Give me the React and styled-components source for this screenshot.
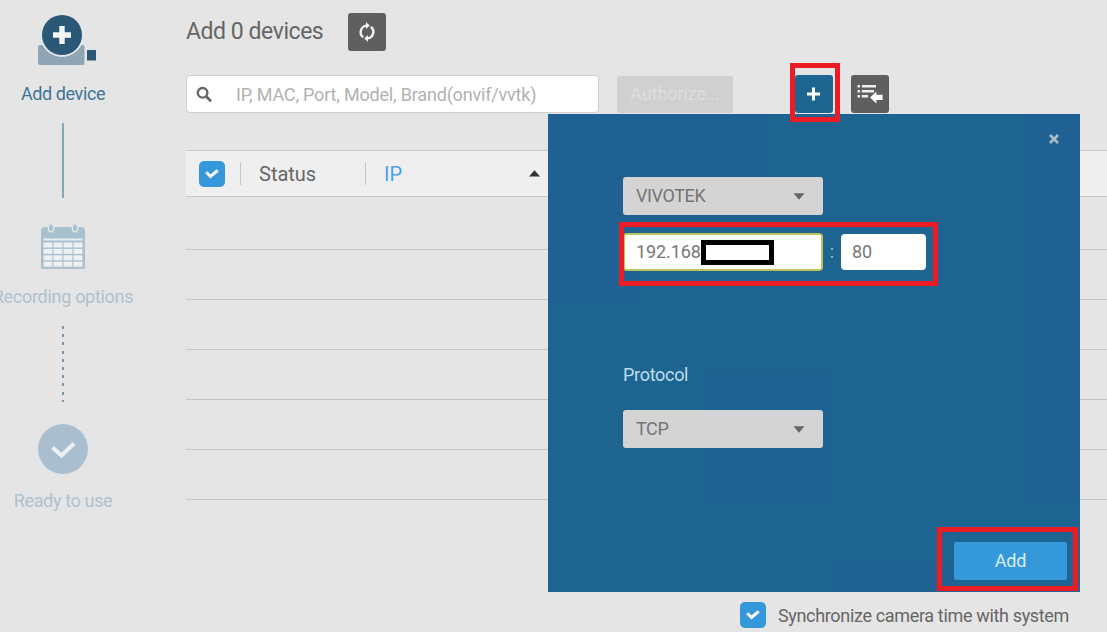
import React from 'react';
import styled, { createGlobalStyle } from 'styled-components';


const GlobalStyle = createGlobalStyle`
  * {
    box-sizing: border-box;
  }

  body {
    margin: 0;
    font-family: Roboto, "Liberation Sans", sans-serif;
    color: #666;
    background: #e5e5e5;
  }
`;

const Page = styled.div`
  position: relative;
  display: flex;
  width: 1107px;
  height: 632px;
  overflow: hidden;
  background: #e5e5e5;
`;

const Steps = styled.nav`
  display: flex;
  flex-direction: column;
  align-items: center;
  flex: none;
  width: 126px;
  margin-right: 60px;
  padding-top: 13px;
`;

const StepIcon = styled.svg`
  display: block;
  flex: none;
  overflow: visible;
`;

const StepLabel = styled.div`
  height: 22px;
  margin-top: ${props => props.$gap}px;
  font-size: 18px;
  line-height: 22px;
  letter-spacing: ${props => props.$spacing || 0}px;
  white-space: nowrap;
  color: ${props => (props.$active ? '#3d7498' : '#afc1cf')};
`;

const SolidLine = styled.div`
  flex: none;
  width: 2px;
  height: 75px;
  margin: 18px 0 26px;
  background: #82a7bb;
`;

const DottedLine = styled.div`
  flex: none;
  width: 2px;
  height: 76px;
  margin: 18px 0 22px;
  background: repeating-linear-gradient(#7595ad 0 3px, transparent 3px 8.2px);
`;

const Main = styled.main`
  display: flex;
  flex-direction: column;
  flex: 1;
  min-width: 0;
`;

const Header = styled.header`
  display: flex;
  align-items: center;
  height: 37px;
  margin-top: 13px;
`;

const Title = styled.h1`
  width: 162px;
  margin: 0;
  font-size: 23px;
  font-weight: 400;
  line-height: 37px;
  letter-spacing: -0.45px;
  white-space: nowrap;
`;

const SquareButton = styled.button`
  display: flex;
  align-items: center;
  justify-content: center;
  flex: none;
  width: 38px;
  height: 38px;
  margin-left: ${props => props.$left || 0}px;
  padding: 0;
  border: 0;
  border-radius: 3px;
  background: ${props => (props.$primary ? '#1d6691' : '#5f5f5f')};
`;

const Toolbar = styled.div`
  display: flex;
  align-items: center;
  height: 38px;
  margin-top: 25px;
`;

const SearchBox = styled.div`
  display: flex;
  align-items: center;
  width: 413px;
  height: 38px;
  padding-left: 9px;
  border: 1px solid #cfcfcf;
  border-radius: 4px;
  background: #fff;
  color: #b2b2b2;
  font-size: 18px;
  letter-spacing: -0.18px;
  white-space: nowrap;

  svg {
    margin-right: 23px;
  }
`;

const AuthorizeButton = styled.button`
  width: 116px;
  height: 37px;
  margin-left: 18px;
  padding: 0 0 2px;
  border: 0;
  border-radius: 3px;
  background: #d0d0d0;
  color: #dedede;
  font: 18px Roboto, sans-serif;
  letter-spacing: -0.1px;
`;

const Table = styled.div`
  margin-top: 37px;
`;

const TableHead = styled.div`
  display: flex;
  align-items: center;
  height: 47px;
  padding-left: 13px;
  border: 1px solid #c8c8c8;
  border-width: 1px 0;
  background: #efefef;
`;

const HeadCell = styled.div`
  display: flex;
  align-items: center;
  width: ${props => props.$width}px;
  height: 23px;
  margin-left: ${props => props.$left || 0}px;
  padding-left: 18px;
  border-left: 1px solid #c6c6c6;
  font-size: 20px;
  color: ${props => (props.$active ? '#4aa0e6' : '#666')};
`;

const SortArrow = styled.svg`
  margin-left: auto;
`;

const TableRow = styled.div`
  height: ${props => props.$height || 50}px;
  border-bottom: 1px solid #c6c6c6;
`;

const CheckBox = styled.span`
  display: flex;
  align-items: center;
  justify-content: center;
  flex: none;
  width: 26px;
  height: 26px;
  border-radius: 5px;
  background: #3598db;
`;

const SyncOption = styled.label`
  display: flex;
  align-items: center;
  height: 26px;
  margin: 102px 0 0 554px;
  font-size: 18px;
  letter-spacing: -0.34px;
  white-space: nowrap;

  ${CheckBox} {
    margin-right: 12px;
  }
`;

// The surface is slightly uneven: a few areas carry a bluer tint
const tint = 'linear-gradient(#206194, #206194)';

const Popup = styled.section`
  position: absolute;
  left: 548px;
  top: 114px;
  display: flex;
  flex-direction: column;
  width: 532px;
  height: 478px;
  padding: 19px 13px 12px 75px;
  background:
    ${tint} 0 0 / 220px 68px no-repeat,
    ${tint} 0 0 / 92px 190px no-repeat,
    ${tint} 156px 259px / 126px 128px no-repeat,
    ${tint} 476px 0 / 56px 386px no-repeat,
    ${tint} 284px 450px / 122px 28px no-repeat,
    #1d6590;
`;

const CloseButton = styled.button`
  align-self: flex-end;
  display: flex;
  width: 12px;
  height: 12px;
  margin-right: 7px;
  padding: 0;
  border: 0;
  background: none;
`;

const Select = styled.div`
  display: flex;
  align-items: center;
  justify-content: space-between;
  flex: none;
  width: 200px;
  height: 38px;
  margin-top: ${props => props.$gap}px;
  padding: 0 18px 2px 13px;
  border-radius: 3px;
  background: #d4d4d4;
  color: #757575;
  font-size: 18px;
  letter-spacing: -0.4px;

  svg {
    margin-top: 2px;
  }
`;

const AddressRow = styled.div`
  display: flex;
  align-items: center;
  height: 38px;
  margin-top: 18px;
`;

const Field = styled.div`
  display: flex;
  align-items: center;
  width: ${props => props.$width}px;
  height: ${props => (props.$focused ? 38 : 36)}px;
  padding-left: 11px;
  padding-bottom: ${props => (props.$focused ? 0 : 1)}px;
  border: ${props => (props.$focused ? '2px solid #bec455' : '0')};
  border-radius: 4px;
  background: #fff;
  color: #777;
  font-size: 18px;
`;

const AddressText = styled.span`
  width: 65px;
  padding-bottom: 1px;
  letter-spacing: -0.1px;
`;

const Mask = styled.span`
  flex: none;
  width: 73px;
  height: 25px;
  border: 5px solid #000;
  background: #fff;
`;

const Colon = styled.span`
  width: 18px;
  padding-bottom: 2px;
  text-align: center;
  color: #8fc0dc;
  font-size: 18px;
`;

const FieldLabel = styled.div`
  height: 22px;
  margin-top: 93px;
  font-size: 18px;
  line-height: 22px;
  letter-spacing: -0.3px;
  color: #bfdcee;
`;

const AddButton = styled.button`
  align-self: flex-end;
  width: 113px;
  height: 38px;
  margin-top: auto;
  padding: 0 0 2px;
  border: 0;
  border-radius: 2px;
  background: #3498db;
  color: #d9eefb;
  font: 18px Roboto, sans-serif;
  letter-spacing: -0.2px;
`;

// Red callout frame drawn over the controls
const Callout = styled.div`
  position: absolute;
  left: ${props => props.$x}px;
  top: ${props => props.$y}px;
  width: ${props => props.$w}px;
  height: ${props => props.$h}px;
  border: 5px solid #ec1c24;
`;


const Check = () => (
  <svg width="14" height="10" viewBox="0 0 14 10">
    <path d="M1.3 3.3 L5.5 7.5 L12.7 1.3" fill="none" stroke="#fff" strokeWidth="3" />
  </svg>
);

const DownArrow = () => (
  <svg width="12" height="7" viewBox="0 0 12 7">
    <path d="M0.5 0.3 H11.5 L6 6.7 Z" fill="#666" />
  </svg>
);

const CameraIcon = () => (
  <StepIcon width="60" height="54" viewBox="0 0 60 54">
    <rect x="5" y="32" width="46.5" height="20" rx="2" fill="#8fa4b5" />
    <circle cx="29" cy="22" r="21.9" fill="#e5e5e5" />
    <circle cx="29" cy="22" r="20" fill="#2b5877" />
    <path d="M29 13 V31 M20 22 H38" stroke="#f2f4f5" strokeWidth="5.4" />
    <rect x="54" y="37" width="9" height="10.5" fill="#2b5877" />
  </StepIcon>
);

const CalendarIcon = () => (
  <StepIcon width="46" height="46" viewBox="0 0 46 46">
    <path d="M1 7 Q1 3 5 3 H41 Q45 3 45 7 V43 Q45 45 43 45 H3 Q1 45 1 43 Z" fill="#a9c0d1" />
    <rect x="3.5" y="14.5" width="39" height="2" fill="#e8edf0" />
    <g fill="#eef0f1">
      {[18.5, 24.9, 31.3, 37.7].map(y => (
        [3.5, 13.5, 23.5, 33.5].map(x => <rect key={`${x}-${y}`} x={x} y={y} width="8.9" height="5" />)
      ))}
    </g>
    <g fill="#a9c0d1" stroke="#e5e5e5" strokeWidth="1.4">
      <ellipse cx="11" cy="3.8" rx="2.7" ry="4" />
      <ellipse cx="35" cy="3.8" rx="2.7" ry="4" />
    </g>
  </StepIcon>
);

const ReadyIcon = () => (
  <StepIcon width="50" height="50" viewBox="0 0 50 50">
    <circle cx="25" cy="25" r="25" fill="#a9bfcf" />
    <path d="M14.5 23.5 L23.5 31.5 L36 19.5" fill="none" stroke="#edf0f2" strokeWidth="4" />
  </StepIcon>
);

const RefreshIcon = () => (
  <svg width="18" height="20" viewBox="0 0 18 20">
    <g fill="none" stroke="#f2f2f2" strokeWidth="2.4">
      <path d="M5.2 15.2 A6.5 6.5 0 0 1 8.4 3.6" />
      <path d="M12.8 4.8 A6.5 6.5 0 0 1 9.6 16.4" />
    </g>
    <path d="M8 0.2 L11.8 3.6 L8 7 Z M10 13 L6.2 16.4 L10 19.8 Z" fill="#f2f2f2" />
  </svg>
);

const SearchIcon = () => (
  <svg width="17" height="17" viewBox="0 0 17 17">
    <circle cx="6.6" cy="6.8" r="4.8" fill="none" stroke="#666" strokeWidth="2.4" />
    <path d="M10 10.2 L15 15.2" stroke="#666" strokeWidth="2.9" />
  </svg>
);

const PlusIcon = () => (
  <svg width="14" height="14" viewBox="0 0 14 14">
    <path d="M6.5 0.5 V13.5 M0 7 H13" stroke="#fff" strokeWidth="3" />
  </svg>
);

const ListImportIcon = () => (
  <svg width="26" height="20" viewBox="0 0 26 20">
    <path d="M0.5 2.3 H3 M0.5 7.3 H3 M0.5 12.3 H3" stroke="#eee" strokeWidth="2.6" />
    <path d="M4.8 2.3 H19 M4.8 7.3 H17 M4.8 12.3 H11" stroke="#eee" strokeWidth="2.6" />
    <path d="M13 13.4 L19.4 7.4 V10.8 H25.6 V16 H19.4 V19.4 Z" fill="#fff" />
  </svg>
);


const App = () => (
  <Page>
    <GlobalStyle />
    <Steps>
      <CameraIcon />
      <StepLabel $active $gap={16} $spacing={-0.4}>Add device</StepLabel>
      <SolidLine />
      <CalendarIcon />
      <StepLabel $gap={16} $spacing={-0.3}>Recording options</StepLabel>
      <DottedLine />
      <ReadyIcon />
      <StepLabel $gap={16} $spacing={-0.35}>Ready to use</StepLabel>
    </Steps>
    <Main>
      <Header>
        <Title>Add 0 devices</Title>
        <SquareButton aria-label="Refresh"><RefreshIcon /></SquareButton>
      </Header>
      <Toolbar>
        <SearchBox>
          <SearchIcon />
          <span>IP, MAC, Port, Model, Brand(onvif/vvtk)</span>
        </SearchBox>
        <AuthorizeButton>Authorize...</AuthorizeButton>
        <SquareButton $primary $left={62} aria-label="Add"><PlusIcon /></SquareButton>
        <SquareButton $left={18} aria-label="Import list"><ListImportIcon /></SquareButton>
      </Toolbar>
      <Table>
        <TableHead>
          <CheckBox><Check /></CheckBox>
          <HeadCell $left={15} $width={125}>Status</HeadCell>
          <HeadCell $active $width={175}>
            IP
            <SortArrow width="11" height="7" viewBox="0 0 11 7">
              <path d="M5.5 0.3 L11 6.5 H0 Z" fill="#333" />
            </SortArrow>
          </HeadCell>
        </TableHead>
        <TableRow $height={53} />
        <TableRow />
        <TableRow />
        <TableRow />
        <TableRow />
        <TableRow />
      </Table>
      <SyncOption>
        <CheckBox><Check /></CheckBox>
        Synchronize camera time with system
      </SyncOption>
    </Main>
    <Popup>
      <CloseButton aria-label="Close">
        <svg width="12" height="12" viewBox="0 0 12 12">
          <path d="M2 2 L10 10 M10 2 L2 10" stroke="#a9bcc8" strokeWidth="2.6" />
        </svg>
      </CloseButton>
      <Select $gap={32}>VIVOTEK<DownArrow /></Select>
      <AddressRow>
        <Field $focused $width={200}>
          <AddressText>192.168</AddressText>
          <Mask />
        </Field>
        <Colon>:</Colon>
        <Field $width={85}>80</Field>
      </AddressRow>
      <FieldLabel>Protocol</FieldLabel>
      <Select $gap={24}>TCP<DownArrow /></Select>
      <AddButton>Add</AddButton>
    </Popup>
    <Callout $x={790} $y={63} $w={50} $h={59} />
    <Callout $x={619} $y={222} $w={319} $h={64} />
    <Callout $x={937} $y={527} $w={141} $h={64} />
  </Page>
);

export default App;
